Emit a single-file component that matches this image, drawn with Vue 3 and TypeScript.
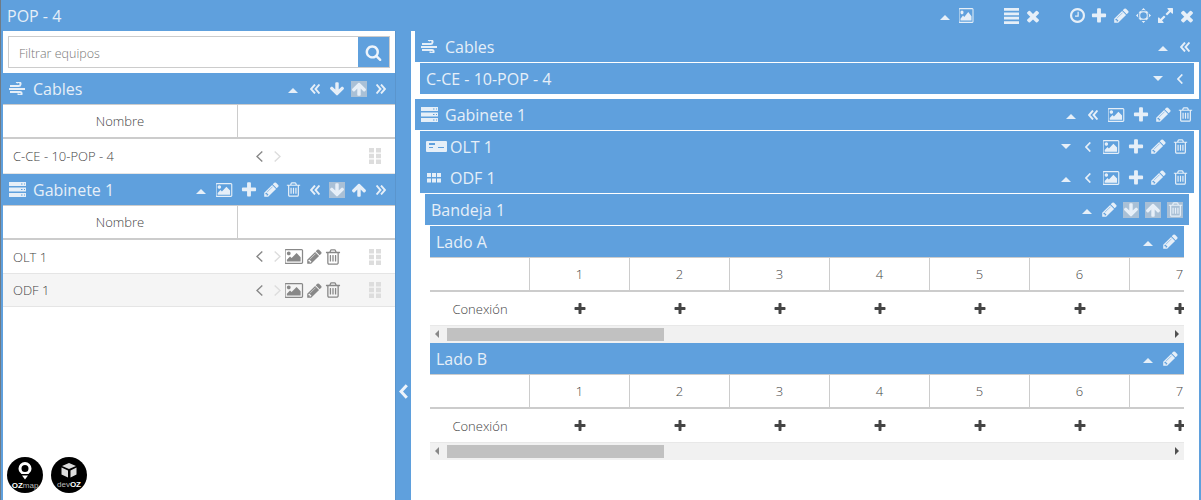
<script setup lang="ts">
import { h } from 'vue'

type Shape = { vb: string; w: number; h: number; d?: string; stroke?: string; sw?: number }

const I: Record<string, Shape> = {
  caret: { vb: '0 0 10 5', w: 10, h: 5, d: 'M0 5L5 0l5 5z' },
  down: { vb: '0 0 10 5', w: 10, h: 5, d: 'M0 0h10L5 5z' },
  dl: { vb: '0 0 10 10', w: 10, h: 10, stroke: 'M5 .5L1 5l4 4.5M9.5 .5L5.5 5l4 4.5', sw: 1.9 },
  dr: { vb: '0 0 10 10', w: 10, h: 10, stroke: 'M.5 .5L4.5 5l-4 4.5M5 .5L9 5l-4 4.5', sw: 1.9 },
  al: { vb: '0 0 6 10', w: 6, h: 10, stroke: 'M5.3 .5L1 5l4.3 4.5', sw: 1.7 },
  pl: { vb: '0 0 7 11', w: 7, h: 11, stroke: 'M6.300 .5L1 5.500l5.300 5', sw: 1.4 },
  pr: { vb: '0 0 7 11', w: 7, h: 11, stroke: 'M.7 .5L6 5.500l-5.300 5', sw: 1.4 },
  split: { vb: '0 0 9 15', w: 9, h: 15, stroke: 'M7.800 1.200L2 7.500l5.800 6.300', sw: 3 },
  pic: {
    vb: '0 128 2048 1536', w: 18, h: 14,
    d: 'M576 576q0 80-56 136t-136 56-136-56-56-136 56-136 136-56 136 56 56 136zm1024 384v448h-1408v-192l320-320 160 160 512-512zm96-704h-1600q-13 0-22.5 9.5t-9.5 22.5v1216q0 13 9.5 22.5t22.5 9.5h1600q13 0 22.5-9.5t9.5-22.5v-1216q0-13-9.5-22.5t-22.5-9.5zm160 32v1216q0 66-47 113t-113 47h-1600q-66 0-113-47t-47-113v-1216q0-66 47-113t113-47h1600q66 0 113 47t47 113z'
  },
  plus: {
    vb: '0 0 1792 1792', w: 18, h: 18,
    d: 'M1600 736v192q0 40-28 68t-68 28h-416v416q0 40-28 68t-68 28h-192q-40 0-68-28t-28-68v-416h-416q-40 0-68-28t-28-68v-192q0-40 28-68t68-28h416v-416q0-40 28-68t68-28h192q40 0 68 28t28 68v416h416q40 0 68 28t28 68z'
  },
  pen: {
    vb: '0 0 1792 1792', w: 17, h: 17,
    d: 'M491 1536l91-91-235-235-91 91v107h128v128h107zm523-928q0-22-22-22-10 0-17 7l-542 542q-7 7-7 17 0 22 22 22 10 0 17-7l542-542q7-7 7-17zm-54-192l416 416-832 832h-416v-416zm683 96q0 53-37 90l-166 166-416-416 166-165q36-38 90-38 53 0 91 38l235 234q37 39 37 91z'
  },
  trash: {
    vb: '0 0 1792 1792', w: 17, h: 17,
    d: 'M704 736v576q0 14-9 23t-23 9h-64q-14 0-23-9t-9-23v-576q0-14 9-23t23-9h64q14 0 23 9t9 23zm256 0v576q0 14-9 23t-23 9h-64q-14 0-23-9t-9-23v-576q0-14 9-23t23-9h64q14 0 23 9t9 23zm256 0v576q0 14-9 23t-23 9h-64q-14 0-23-9t-9-23v-576q0-14 9-23t23-9h64q14 0 23 9t9 23zm128 724v-948h-896v948q0 22 7 40.5t14.5 27 10.5 8.5h832q3 0 10.5-8.5t14.5-27 7-40.5zm-672-1076h448l-48-117q-7-9-17-11h-317q-10 2-17 11zm928 32v64q0 14-9 23t-23 9h-96v948q0 83-47 143.5t-113 60.5h-832q-66 0-113-58.5t-47-141.5v-952h-96q-14 0-23-9t-9-23v-64q0-14 9-23t23-9h309l70-167q15-37 54-63t79-26h320q40 0 79 26t54 63l70 167h309q14 0 23 9t9 23z'
  },
  times: {
    vb: '0 0 1792 1792', w: 18, h: 18,
    d: 'M1490 1322q0 40-28 68l-136 136q-28 28-68 28t-68-28l-294-294-294 294q-28 28-68 28t-68-28l-136-136q-28-28-28-68t28-68l294-294-294-294q-28-28-28-68t28-68l136-136q28-28 68-28t68 28l294 294 294-294q28-28 68-28t68 28l136 136q28 28 28 68t-28 68l-294 294 294 294q28 28 28 68z'
  },
  adown: {
    vb: '0 0 1792 1792', w: 16, h: 16,
    d: 'M1675 832q0 53-37 90l-651 652q-39 37-91 37-53 0-90-37l-651-652q-38-36-38-90 0-53 38-91l74-75q39-37 91-37 53 0 90 37l294 294v-704q0-52 38-90t90-38h128q52 0 90 38t38 90v704l294-294q37-37 90-37 52 0 91 37l75 75q37 39 37 91z'
  },
  aup: {
    vb: '0 0 1792 1792', w: 16, h: 16,
    d: 'M1675 971q0 51-37 90l-75 75q-38 38-91 38-54 0-90-38l-294-293v704q0 52-37.5 84.5t-90.5 32.5h-128q-53 0-90.5-32.5t-37.5-84.5v-704l-294 293q-36 38-90 38t-90-38l-75-75q-38-38-38-90 0-53 38-91l651-651q35-37 90-37 54 0 91 37l651 651q37 39 37 91z'
  },
  bars: { vb: '0 0 15 16', w: 15, h: 16, d: 'M0 0h15v2.800H0zM0 4.400h15v2.800H0zM0 8.800h15v2.800H0zM0 13.200h15V16H0z' },
  clock: {
    vb: '128 128 1536 1536', w: 15, h: 15,
    d: 'M1024 544v448q0 14-9 23t-23 9h-320q-14 0-23-9t-9-23v-64q0-14 9-23t23-9h224v-352q0-14 9-23t23-9h64q14 0 23 9t9 23zm416 352q0-148-73-273t-198-198-273-73-273 73-198 198-73 273 73 273 198 198 273 73 273-73 198-198 73-273zm224 0q0 209-103 385.5t-279.5 279.5-385.5 103-385.5-103-279.5-279.5-103-385.5 103-385.5 279.5-279.5 385.5-103 385.5 103 279.5 279.5 103 385.5z'
  },
  target: {
    vb: '0 0 15 15', w: 15, h: 15,
    d: 'M7.500 2a5.500 5.500 0 1 0 0 11 5.500 5.500 0 0 0 0-11zm0 2.200a3.300 3.300 0 1 1 0 6.600 3.300 3.300 0 0 1 0-6.600zM7.500 0l3 3.300h-6zM7.500 15l-3-3.300h6zM0 7.500l3.300-3v6zM15 7.500l-3.300 3v-6z'
  },
  expand: {
    vb: '128 128 1536 1536', w: 15, h: 15,
    d: 'M883 1056q0 13-10 23l-332 332 144 144q19 19 19 45t-19 45-45 19h-448q-26 0-45-19t-19-45v-448q0-26 19-45t45-19 45 19l144 144 332-332q10-10 23-10t23 10l114 114q10 10 10 23zm781-864v448q0 26-19 45t-45 19-45-19l-144-144-332 332q-10 10-23 10t-23-10l-114-114q-10-10-10-23t10-23l332-332-144-144q-19-19-19-45t19-45 45-19h448q26 0 45 19t19 45z'
  },
  search: {
    vb: '0 0 1792 1792', w: 17, h: 17,
    d: 'M1216 832q0-185-131.500-316.500t-316.500-131.500-316.500 131.500-131.500 316.500 131.500 316.500 316.500 131.500 316.500-131.500 131.500-316.500zm512 832q0 52-38 90t-90 38q-54 0-90-38l-343-342q-179 124-399 124-143 0-273.500-55.500t-225-150-150-225-55.500-273.500 55.500-273.500 150-225 225-150 273.500-55.500 273.500 55.500 225 150 150 225 55.500 273.500q0 220-124 399l343 343q37 37 37 90z'
  },
  wind: {
    vb: '0 0 17 13', w: 17, h: 13, sw: 2,
    stroke: 'M1 4h8.500a2 2 0 1 0-1.800-2.800M0 7h16M1 10h10a1.600 1.600 0 1 1-1.600 1.600'
  },
  server: {
    vb: '0 0 17 15', w: 17, h: 15,
    d: 'M0 0h17v4H0zM12 1.500v1h1.500v-1zM15 1.500v1h1v-1zM0 5.500h17v4H0zM12 7v1h1.500V7zM15 7v1h1V7zM0 11h17v4H0zM12 12.500v1h1.500v-1zM15 12.500v1h1v-1z'
  },
  olt: {
    vb: '0 0 21 11', w: 21, h: 11,
    d: 'M1 0h19a1 1 0 0 1 1 1v9a1 1 0 0 1-1 1H1a1 1 0 0 1-1-1V1a1 1 0 0 1 1-1zm2 2v2h6V2zm0 4v1h4V6zm9 0v1h6V6z'
  },
  grid: {
    vb: '0 0 14 10', w: 14, h: 10,
    d: 'M0 0h4v4H0zM5 0h4v4H5zM10 0h4v4h-4zM0 5.500h4v4H0zM5 5.500h4v4H5zM10 5.500h4v4h-4z'
  },
  drag: {
    vb: '0 0 12 16', w: 12, h: 16,
    d: 'M0 0h5v4.500H0zM7 0h5v4.500H7zM0 5.800h5v4.500H0zM7 5.800h5v4.500H7zM0 11.500h5V16H0zM7 11.500h5V16H7z'
  }
}

const Ic = (p: { n: string; c?: string; w?: number; h?: number }) => {
  const s = I[p.n]
  return h(
    'svg',
    {
      class: ['ic', p.c],
      viewBox: s.vb,
      width: p.w ?? s.w,
      height: p.h ?? s.h,
      preserveAspectRatio: 'none'
    },
    [
      s.d ? h('path', { d: s.d, fill: 'currentColor', 'fill-rule': 'evenodd' }) : null,
      s.stroke
        ? h('path', { d: s.stroke, fill: 'none', stroke: 'currentColor', 'stroke-width': s.sw })
        : null
    ]
  )
}
Ic.props = ['n', 'c', 'w', 'h']

// A trailing "!" marks the action as disabled (grey box).
const Tools = (p: { items: string[] }) =>
  h(
    'div',
    { class: 'tools' },
    p.items.map((raw) => {
      const off = raw.endsWith('!')
      const n = off ? raw.slice(0, -1) : raw
      return h('span', { class: ['cell', 'cell-' + n] }, [
        h('span', { class: ['glyph', off ? 'off' : ''] }, [h(Ic, { n })])
      ])
    })
  )
Tools.props = ['items']

const cols = [1, 2, 3, 4, 5, 6, 7]
const sides = ['Lado A', 'Lado B']
const leftRows = ['OLT 1', 'ODF 1']
</script>

<template>
  <div class="app">
    <header class="title">
      <span class="title-text">POP - 4</span>
      <div class="title-tools">
        <Tools :items="['caret', 'pic']" class="t-small" />
        <Tools :items="['bars', 'times']" />
        <Tools :items="['clock', 'plus', 'pen', 'target', 'expand', 'times']" />
      </div>
    </header>

    <div class="body">
      <aside class="left">
        <div class="search">
          <input class="search-input" type="text" placeholder="Filtrar equipos" />
          <button class="search-btn" type="button"><Ic n="search" /></button>
        </div>

        <div class="bar">
          <Ic n="wind" c="lead" />
          <span class="bar-name">Cables</span>
          <Tools :items="['caret', 'dl', 'adown', 'aup!', 'dr']" />
        </div>
        <div class="lhead">
          <div class="lhead-name">Nombre</div>
          <div></div>
        </div>
        <div class="lrow first">
          <span class="lrow-name">C-CE - 10-POP - 4</span>
          <span class="pager"><Ic n="pl" /><Ic n="pr" c="faint" /></span>
          <Ic n="drag" c="drag" />
        </div>

        <div class="bar">
          <Ic n="server" c="lead" />
          <span class="bar-name">Gabinete 1</span>
          <Tools :items="['caret', 'pic', 'plus', 'pen', 'trash', 'dl', 'adown!', 'aup', 'dr']" />
        </div>
        <div class="lhead">
          <div class="lhead-name">Nombre</div>
          <div></div>
        </div>
        <div v-for="(r, i) in leftRows" :key="r" class="lrow" :class="{ alt: i === 1 }">
          <span class="lrow-name">{{ r }}</span>
          <span class="pager"><Ic n="pl" /><Ic n="pr" c="faint" /></span>
          <span class="row-acts">
            <Ic n="pic" :w="20" :h="15" />
            <Ic n="pen" />
            <Ic n="trash" :w="18" :h="18" />
          </span>
          <Ic n="drag" c="drag" />
        </div>

        <div class="logos">
          <svg class="logo" viewBox="0 0 36 36" width="36" height="36">
            <circle cx="18" cy="18" r="18" fill="#000" />
            <path fill-rule="evenodd" d="M18 5a6.500 6.500 0 0 0-6.500 6.500c0 2.500 1.500 4 3 5.500h7c1.500-1.500 3-3 3-5.500A6.500 6.500 0 0 0 18 5zm0 3a3.500 3.500 0 1 1 0 7 3.500 3.500 0 0 1 0-7zM15 18.500h6l-3 4z" fill="#fff" />
            <text x="18" y="31" text-anchor="middle" class="logo-text"><tspan fill="#fff" font-weight="700">OZ</tspan>map</text>
          </svg>
          <svg class="logo" viewBox="0 0 36 36" width="36" height="36">
            <circle cx="18" cy="18" r="18" fill="#000" />
            <path d="M18 6l-7 3 7 3 7-3zM10.500 10.500l6.500 3v7l-6.500-3zM25.500 10.500l-6 3v7l6-3z" fill="#ddd" />
            <text x="18" y="29.500" text-anchor="middle" class="logo-text dev">dev<tspan fill="#fff" font-weight="700">OZ</tspan></text>
          </svg>
        </div>
      </aside>

      <div class="split"><Ic n="split" /></div>

      <main class="right">
        <div class="bar line">
          <Ic n="wind" c="lead" />
          <span class="bar-name">Cables</span>
          <Tools :items="['caret', 'dl']" />
        </div>
        <div class="inner pad-b">
          <div class="bar">
            <span class="bar-name">C-CE - 10-POP - 4</span>
            <Tools :items="['down', 'al']" />
          </div>
        </div>

        <div class="bar line">
          <Ic n="server" c="lead" />
          <span class="bar-name">Gabinete 1</span>
          <Tools :items="['caret', 'dl', 'pic', 'plus', 'pen', 'trash']" />
        </div>
        <div class="inner">
          <div class="bar olt">
            <Ic n="olt" c="lead" />
            <span class="bar-name">OLT 1</span>
            <Tools :items="['down', 'al', 'pic', 'plus', 'pen', 'trash']" />
          </div>
          <div class="bar odf line">
            <Ic n="grid" c="lead" />
            <span class="bar-name">ODF 1</span>
            <Tools :items="['caret', 'al', 'pic', 'plus', 'pen', 'trash']" />
          </div>
          <div class="inner">
            <div class="bar line">
              <span class="bar-name">Bandeja 1</span>
              <Tools :items="['caret', 'pen', 'adown!', 'aup!', 'trash!']" />
            </div>
            <div class="inner">
              <section v-for="s in sides" :key="s">
                <div class="bar">
                  <span class="bar-name">{{ s }}</span>
                  <Tools :items="['caret', 'pen']" />
                </div>
                <div class="ports">
                  <div class="ports-head">
                    <div class="port-label"></div>
                    <div v-for="c in cols" :key="c" class="port-num">{{ c }}</div>
                  </div>
                  <div class="ports-row">
                    <div class="port-label">Conexión</div>
                    <div v-for="c in cols" :key="c" class="port-add"><Ic n="plus" :w="14" :h="14" /></div>
                  </div>
                </div>
                <div class="scroll">
                  <span class="tri tri-l"></span>
                  <span class="thumb"></span>
                  <span class="tri tri-r"></span>
                </div>
              </section>
            </div>
          </div>
        </div>
      </main>
    </div>
  </div>
</template>

<style scoped>
.app {
  width: 1201px;
  height: 500px;
  box-sizing: border-box;
  border-left: 1px solid #6f7b86;
  overflow: hidden;
  display: flex;
  flex-direction: column;
  background: #5fa0dd;
  font-family: "Open Sans", "Liberation Sans", sans-serif;
  color: #555;
}
.title {
  height: 31px;
  flex: none;
  display: flex;
  align-items: center;
  justify-content: space-between;
  padding: 0 3px 0 6px;
  color: #e6eff8;
}
.title-text {
  font-size: 16px;
}
.title-tools {
  display: flex;
  gap: 22px;
}
.body {
  flex: 1;
  min-height: 0;
  display: flex;
  padding: 0 2px 0 2px;
}
.left {
  width: 392px;
  flex: none;
  background: #fff;
  display: flex;
  flex-direction: column;
}
.search {
  display: flex;
  padding: 5px;
}
.search-input {
  flex: 1;
  min-width: 0;
  height: 32px;
  box-sizing: border-box;
  border: 1px solid #ccc;
  border-right: 0;
  padding: 2px 10px 0;
  font: 300 12.5px "Open Sans", sans-serif;
  color: #555;
  outline: none;
}
.search-input::placeholder {
  color: #777;
  opacity: 1;
}
.search-btn {
  width: 32px;
  height: 32px;
  box-sizing: border-box;
  border: 1px solid #ccc;
  border-left: 0;
  background: #5fa0dd;
  color: #eef4fb;
  padding: 0;
  display: flex;
  align-items: center;
  justify-content: center;
}
.bar {
  height: 31px;
  flex: none;
  display: flex;
  align-items: center;
  padding: 0 3px 0 6px;
  background: #5fa0dd;
  color: #e6eff8;
}
.bar-name {
  font-size: 16px;
  white-space: nowrap;
}
.bar > .lead + .bar-name {
  margin-left: 7px;
}
.olt > .lead + .bar-name {
  margin-left: 3px;
}
.odf > .lead {
  margin-left: 1px;
}
.odf > .lead + .bar-name {
  margin-left: 9px;
}
.line {
  margin-bottom: 1px;
}
.lhead {
  height: 32px;
  flex: none;
  display: grid;
  grid-template-columns: 235px 1fr;
  border-top: 1px solid #ccc;
  border-bottom: 2px solid #ccc;
  font-size: 13px;
  font-weight: 300;
}
.lhead-name {
  display: flex;
  align-items: center;
  justify-content: center;
  border-right: 1px solid #ccc;
  color: #444;
}
.lrow {
  height: 33px;
  flex: none;
  display: flex;
  align-items: center;
  border-bottom: 1px solid #e5e5e5;
  font-size: 13px;
  font-weight: 300;
}
.lrow.first {
  height: 34px;
}
.lrow.alt {
  background: #f5f5f5;
  height: 32px;
}
.lrow-name {
  width: 252px;
  padding-left: 10px;
  box-sizing: border-box;
  color: #444;
}
.pager {
  display: flex;
  gap: 11px;
  color: #888;
  width: 30px;
  margin-left: 1px;
}
.row-acts {
  display: flex;
  align-items: center;
  gap: 1px;
  margin-left: -1px;
  color: #888;
}
.drag {
  color: #ddd;
  margin-left: auto;
  margin-right: 14px;
}
.faint {
  color: #ddd;
}
.logos {
  margin-top: auto;
  display: flex;
  gap: 8px;
  padding: 0 0 7px 4px;
}
.logo-text {
  font: 300 8px "Liberation Sans", sans-serif;
  fill: #bbb;
}
.split {
  width: 16px;
  flex: none;
  box-sizing: border-box;
  border-left: 1px solid #5a95cd;
  display: flex;
  align-items: center;
  justify-content: center;
  color: #eef4fb;
  padding-top: 251px;
}
.right {
  flex: 1;
  min-width: 0;
  background: #fff;
  padding-left: 4px;
}
.inner {
  padding: 0 5px;
}
.pad-b {
  padding-bottom: 5px;
}
.ports {
  overflow: hidden;
  border-top: 1px solid #ccc;
  font-size: 13px;
  font-weight: 300;
}
.ports-head,
.ports-row {
  display: grid;
  grid-template-columns: repeat(8, 100px);
  width: 800px;
}
.ports-head {
  height: 32px;
  border-bottom: 2px solid #ccc;
}
.ports-row {
  height: 33px;
}
.port-label,
.port-num,
.port-add {
  display: flex;
  align-items: center;
  justify-content: center;
  color: #444;
}
.ports-head .port-label,
.port-num {
  border-right: 1px solid #ccc;
}
.scroll {
  height: 17px;
  border-top: 1px solid #e8e8e8;
  background: #f1f1f1;
  position: relative;
}
.thumb {
  position: absolute;
  left: 17px;
  top: 2px;
  width: 217px;
  height: 13px;
  background: #c1c1c1;
}
.tri {
  position: absolute;
  top: 4px;
  width: 0;
  height: 0;
  border-top: 4px solid transparent;
  border-bottom: 4px solid transparent;
}
.tri-l {
  left: 5px;
  border-right: 4px solid #888;
}
.tri-r {
  right: 5px;
  border-left: 4px solid #505050;
}
</style>

<style>
.ic {
  display: block;
  flex: none;
}
.tools {
  display: flex;
  margin-left: auto;
  flex: none;
}
.title-tools .tools {
  margin-left: 0;
}
.cell {
  width: 22px;
  height: 20px;
  display: flex;
  align-items: center;
  justify-content: center;
}
.cell-pic {
  width: 26px;
}
.cell-caret .ic {
  margin-top: 4px;
}
.glyph {
  width: 16px;
  height: 16px;
  display: flex;
  align-items: center;
  justify-content: center;
}
.cell-pic .glyph {
  width: 18px;
}
.glyph.off {
  background: #a9c0d6;
}
.t-small .cell-pic {
  width: 22px;
}
.t-small .cell-pic .ic {
  width: 16px;
  height: 15px;
}
</style>
